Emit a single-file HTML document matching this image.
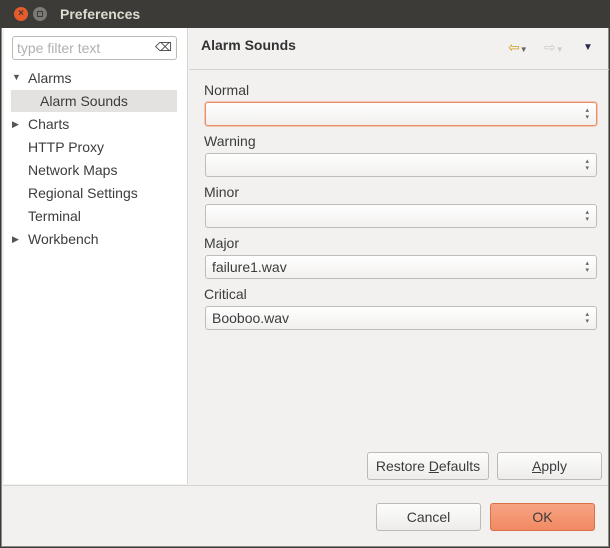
<!DOCTYPE html>
<html><head><meta charset="utf-8"><style>
*{margin:0;padding:0;box-sizing:border-box}
body{width:610px;height:548px;background:#3c3b37;font-family:"Liberation Sans","DejaVu Sans",sans-serif;font-size:14px;color:#3c3c3c;position:relative;overflow:hidden}
.win{position:absolute;left:1px;top:28px;width:608px;height:519px;background:#f2f1f0;border:1px solid #8a8a86;border-top:none}
.title{position:absolute;left:60px;top:6px;color:#dfdbd2;font-weight:bold;font-size:14px}
.cb{position:absolute;top:7px;width:14px;height:14px;border-radius:50%;color:#3c3b37;font-size:10px;line-height:14px;text-align:center;font-weight:bold}
.left{position:absolute;left:2px;top:0;width:184px;height:456px;background:#fff;border-right:1px solid #d8d6d3}
.filter{position:absolute;left:8px;top:8px;width:165px;height:24px;border:1px solid #bdbbb6;border-radius:3px;color:#b0b0b0;padding:3px 4px;font-size:14px}
.it{position:absolute;left:24px;font-size:14px}
.tri{position:absolute;left:8px;font-size:9px;color:#555}
.sel{position:absolute;left:7px;top:62px;width:166px;height:22px;background:#e3e2e0}
.hdr{position:absolute;left:187px;top:0;width:420px;height:42px;border-bottom:1px solid #d6d4d0}
.lbl{position:absolute;left:204px;font-size:14px}
.combo{position:absolute;left:205px;width:392px;height:24px;border:1px solid #c0bdb8;border-radius:3px;background:linear-gradient(#fff,#f1f0ee);font-size:14px;padding:3px 6px}
.sp{position:absolute;right:7px;top:4px;font-size:7px;line-height:7px;color:#666}
.btn{position:absolute;height:28px;border:1px solid #bdbab5;border-radius:3px;background:linear-gradient(#fdfdfc,#edecea);text-align:center;line-height:26px;font-size:14px}
</style></head><body>
<div class="cb" style="left:14px;background:#e55b2c">×</div>
<div class="cb" style="left:33px;background:#7b7a75"><div style="position:absolute;left:4px;top:4px;width:6px;height:6px;border:1px solid #3c3b37"></div></div>
<div class="title">Preferences</div>
<div class="win">
 <div class="left">
  <div class="filter">type filter text<span style="position:absolute;right:4px;top:3px;color:#444;font-size:12px">⌫</span></div>
  <div class="sel"></div>
  <div class="tri" style="top:44px">▼</div><div class="it" style="top:42px">Alarms</div>
  <div class="it" style="left:36px;top:65px">Alarm Sounds</div>
  <div class="tri" style="top:91px">▶</div><div class="it" style="top:88px">Charts</div>
  <div class="it" style="top:111px">HTTP Proxy</div>
  <div class="it" style="top:134px">Network Maps</div>
  <div class="it" style="top:157px">Regional Settings</div>
  <div class="it" style="top:180px">Terminal</div>
  <div class="tri" style="top:206px">▶</div><div class="it" style="top:203px">Workbench</div>
 </div>
 <div class="hdr">
  <div style="position:absolute;left:12px;top:9px;font-weight:bold;font-size:14px;color:#333">Alarm Sounds</div>
  <div style="position:absolute;left:319px;top:11px;color:#d4a020;font-size:14px">⇦<span style="font-size:8px;color:#666">▼</span></div>
  <div style="position:absolute;left:355px;top:11px;color:#ccc;font-size:14px">⇨<span style="font-size:8px">▼</span></div>
  <div style="position:absolute;left:394px;top:14px;color:#2a2a50;font-size:10px">▼</div>
 </div>
</div>
<div class="lbl" style="top:82px">Normal</div>
<div class="combo" style="top:102px;border-color:#e8906a;box-shadow:0 0 0 1px #f6c5b0"><div class="sp">▴<br>▾</div></div>
<div class="lbl" style="top:133px">Warning</div>
<div class="combo" style="top:153px"><div class="sp">▴<br>▾</div></div>
<div class="lbl" style="top:184px">Minor</div>
<div class="combo" style="top:204px"><div class="sp">▴<br>▾</div></div>
<div class="lbl" style="top:235px">Major</div>
<div class="combo" style="top:255px">failure1.wav<div class="sp">▴<br>▾</div></div>
<div class="lbl" style="top:286px">Critical</div>
<div class="combo" style="top:306px">Booboo.wav<div class="sp">▴<br>▾</div></div>
<div class="btn" style="left:367px;top:452px;width:122px">Restore <u>D</u>efaults</div>
<div class="btn" style="left:497px;top:452px;width:105px"><u>A</u>pply</div>
<div style="position:absolute;left:3px;top:485px;width:605px;border-top:1px solid #d6d4d0"></div>
<div class="btn" style="left:376px;top:503px;width:105px">Cancel</div>
<div class="btn" style="left:490px;top:503px;width:105px;background:linear-gradient(#f8a383,#f08a63);border-color:#d8704a">OK</div>
</body></html>
